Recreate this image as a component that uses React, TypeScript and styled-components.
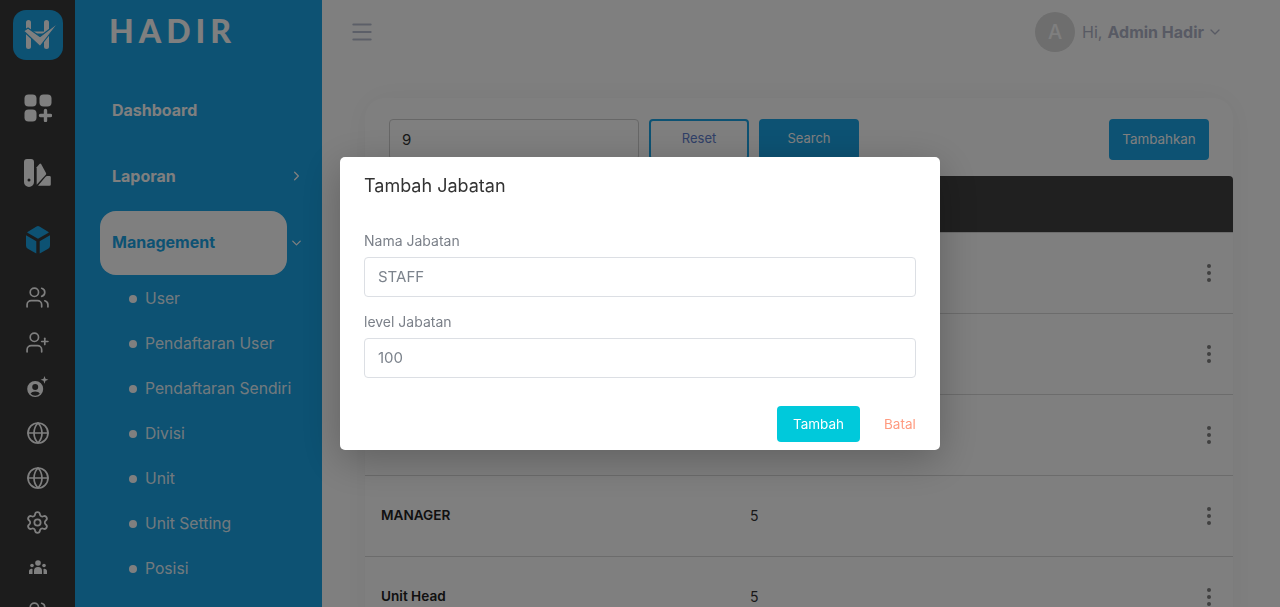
import styled, { createGlobalStyle } from "styled-components";
import {
  ChevronDown,
  ChevronRight,
  Globe,
  Menu,
  Settings,
  UserPlus,
  Users,
} from "lucide-react";

const GlobalStyle = createGlobalStyle`
  html, body {
    margin: 0;
    height: 100%;
    overflow: hidden;
    background: #fff;
    font-family: "Inter", "Liberation Sans", sans-serif;
  }
  * {
    box-sizing: border-box;
  }
`;

const Page = styled.div`
  display: flex;
  height: 607px;
  overflow: hidden;
`;

const Rail = styled.aside`
  width: 75px;
  flex-shrink: 0;
  background: #383838;
  display: flex;
  flex-direction: column;
  align-items: center;
  padding-top: 10px;
  color: #fff;
`;

const LogoBox = styled.div`
  width: 50px;
  height: 50px;
  margin-bottom: 15px;
  border-radius: 13px;
  background: #1aa4e6;
  flex-shrink: 0;
`;

const RailSlot = styled.div<{ $h: number; $active?: boolean }>`
  height: ${({ $h }) => $h}px;
  flex-shrink: 0;
  display: flex;
  align-items: center;
  justify-content: center;
  color: ${({ $active }) => ($active ? "#1aa4e6" : "#fff")};
`;

const Sidebar = styled.nav`
  width: 247px;
  flex-shrink: 0;
  background: #1aa4e6;
  color: #fff;
  padding-left: 25px;
`;

const Brand = styled.div`
  height: 77px;
  padding: 11px 0 0 9px;
  font-family: "Lato", sans-serif;
  font-size: 32px;
  line-height: 40px;
  font-weight: 900;
  letter-spacing: 5px;
`;

const MenuItem = styled.div<{ $active?: boolean }>`
  position: relative;
  width: 187px;
  height: ${({ $active }) => ($active ? "64px" : "66px")};
  margin-top: ${({ $active }) => ($active ? "2px" : "0")};
  margin-bottom: ${({ $active }) => ($active ? "1px" : "0")};
  padding-left: 12px;
  padding-bottom: ${({ $active }) => ($active ? "2px" : "0")};
  display: flex;
  align-items: center;
  font-size: 16px;
  font-weight: 700;
  border-radius: 16px;
  background: ${({ $active }) => ($active ? "#fff" : "transparent")};
  color: ${({ $active }) => ($active ? "#1aa4e6" : "#fff")};

  svg {
    position: absolute;
    right: -17px;
    top: 50%;
    transform: translateY(-50%);
    color: #fff;
  }
`;

const SubItem = styled.div`
  height: 45px;
  padding-left: 29px;
  display: flex;
  align-items: center;
  gap: 8px;
  font-size: 15.7px;
  white-space: nowrap;
  color: rgba(255, 255, 255, 0.9);

  &::before {
    content: "";
    width: 8px;
    height: 8px;
    border-radius: 50%;
    background: #fff;
  }
`;

const Main = styled.main`
  flex: 1;
  min-width: 0;
  padding-right: 47px;
`;

const TopBar = styled.header`
  height: 98px;
  padding: 12px 10px 0 27px;
  display: flex;
  align-items: flex-start;
  justify-content: space-between;
`;

const MenuButton = styled.div`
  height: 40px;
  display: flex;
  align-items: center;
  color: #b9bfd0;
`;

const UserBox = styled.div`
  display: flex;
  align-items: center;
  color: #b0b5c8;
  font-size: 16px;
`;

const Avatar = styled.div`
  width: 40px;
  height: 40px;
  margin-right: 7px;
  border-radius: 50%;
  background: #dcdcdc;
  color: #fff;
  font-size: 20px;
  font-weight: 500;
  display: flex;
  align-items: center;
  justify-content: center;
`;

const UserName = styled.b`
  margin: 0 3px 0 5px;
  font-weight: 700;
`;

const Card = styled.section`
  margin-left: 43px;
  border-radius: 20px 20px 0 0;
  background: #fff;
  box-shadow: 0 0 30px rgba(0, 0, 0, 0.05);
`;

const Toolbar = styled.div`
  display: flex;
  align-items: flex-start;
  padding: 21px 24px 16px;
`;

const SearchField = styled.div`
  width: 250px;
  height: 41px;
  margin-right: 10px;
  padding: 0 12px;
  border: 1px solid #cfcfcf;
  border-radius: 4px;
  font-size: 15px;
  line-height: 39px;
  color: #333;
`;

const ActionButton = styled.button<{ $outline?: boolean; $push?: boolean }>`
  width: 100px;
  height: 41px;
  margin-right: 10px;
  margin-left: ${({ $push }) => ($push ? "auto" : "0")};
  padding: 0 0 ${({ $push }) => ($push ? "2px" : "4px")};
  border-radius: 4px;
  border: 2px solid #1aa4e6;
  background: ${({ $outline }) => ($outline ? "transparent" : "#1aa4e6")};
  color: ${({ $outline }) => ($outline ? "#5f7fd0" : "#fff")};
  font-family: inherit;
  font-size: ${({ $push }) => ($push ? "13.4px" : "13px")};

  &:last-child {
    margin-right: 0;
  }
`;

const TableHead = styled.div`
  height: 56px;
  border-radius: 4px 4px 0 0;
  background: #404040;
`;

const Row = styled.div`
  height: 81px;
  padding: 0 16px;
  display: grid;
  grid-template-columns: 369px 1fr 16px;
  align-items: center;
  border-top: 1px solid #d8d8d8;
  font-size: 14px;
  color: #333;

  span {
    margin-bottom: 2px;
  }
`;

const RowName = styled.span`
  font-size: 13.6px;
  font-weight: 600;
  color: #222;
`;

const Dots = styled.div`
  display: flex;
  flex-direction: column;
  align-items: center;
  gap: 3px;

  i {
    width: 4px;
    height: 4px;
    border-radius: 50%;
    background: #808080;
  }
`;

const Backdrop = styled.div`
  position: fixed;
  inset: 0;
  background: rgba(0, 0, 0, 0.5);
  display: flex;
  justify-content: center;
  align-items: flex-start;
  padding-top: 157px;
  z-index: 100;
`;

const Modal = styled.div`
  width: 600px;
  height: 293px;
  padding: 0 24px;
  border-radius: 5px;
  background: #fff;
  box-shadow: 0 10px 40px rgba(0, 0, 0, 0.25);
`;

const ModalTitle = styled.h2`
  margin: 0;
  padding-top: 17px;
  height: 75px;
  font-size: 18px;
  line-height: 24px;
  font-weight: 400;
  color: #333;
`;

const FieldLabel = styled.label`
  display: block;
  height: 25px;
  font-size: 14px;
  line-height: 18px;
  color: #7b8089;
`;

const FieldInput = styled.div`
  height: 40px;
  margin-bottom: 16px;
  padding: 0 13px;
  border: 1px solid #dcdfe4;
  border-radius: 4px;
  font-size: 15px;
  line-height: 38px;
  color: #7c838c;
`;

const ModalFooter = styled.div`
  display: flex;
  justify-content: flex-end;
  align-items: center;
  gap: 24px;
  padding-top: 12px;
`;

const SubmitButton = styled.button`
  width: 83px;
  height: 36px;
  padding: 0;
  border: 0;
  border-radius: 4px;
  background: #00c9db;
  color: #fff;
  font-family: inherit;
  font-size: 13.5px;
`;

const CancelLink = styled.span`
  width: 32px;
  font-size: 13.5px;
  white-space: nowrap;
  color: #ff9b80;
`;

const LogoMark = () => (
  <svg width="50" height="50" viewBox="0 0 50 50">
    <rect x="13" y="10" width="5" height="29" rx="2.5" fill="#fff" />
    <rect x="31" y="10" width="5" height="29" rx="2.5" fill="#fff" />
    <path d="M18 21.500h13v2H18z" fill="#fff" />
    <path
      d="M10.500 21l4.500-3 12 8.500L46 12 27 36.500z"
      fill="#fff"
      stroke="#1aa4e6"
      strokeWidth="1.2"
      strokeLinejoin="round"
    />
  </svg>
);

const AppsIcon = () => (
  <svg width="28" height="28" viewBox="0 0 28 28" fill="currentColor">
    <rect x="0.5" y="0.5" width="12" height="12" rx="4" />
    <rect x="15.5" y="0.5" width="12" height="12" rx="4" />
    <rect x="0.5" y="15.5" width="12" height="12" rx="4" />
    <path d="M21.5 16.5v10M16.5 21.5h10" stroke="currentColor" strokeWidth="3.4" strokeLinecap="round" />
  </svg>
);

const SwatchIcon = () => (
  <svg width="28" height="28" viewBox="0 0 28 28" fill="currentColor">
    <path
      fillRule="evenodd"
      d="M3 0h4a3 3 0 0 1 3 3v20a5 5 0 0 1-10 0V3a3 3 0 0 1 3-3zm2 19.500a1.500 1.500 0 1 0 0 3 1.500 1.500 0 0 0 0-3z"
    />
    <path d="M12.700 8.300l2.800-3.400a1 1 0 0 1 1.600.2L22 14a1.500 1.500 0 0 1-.2 1.700l-9.100 10z" />
    <path d="M14 26.800l7.600-9a2 2 0 0 1 1.500-.8h2.400a1.300 1.300 0 0 1 1.300 1.300v7.200a1.300 1.300 0 0 1-1.300 1.300z" />
  </svg>
);

const CubeIcon = () => (
  <svg width="24" height="28" viewBox="0 0 24 28" fill="currentColor">
    <path d="M10.500.5a3 3 0 0 1 3 0l9 5.400a.5.5 0 0 1 0 .9L12 12.700 1.500 6.800a.5.5 0 0 1 0-.9z" />
    <path d="M0 9.300l10.300 6v12.300l-8.500-4.800A3.500 3.500 0 0 1 0 19.800z" />
    <path d="M24 9.300l-10.300 6v12.300l8.500-4.800a3.500 3.500 0 0 0 1.800-3z" />
  </svg>
);

const SpecialUserIcon = () => (
  <svg width="24" height="24" viewBox="0 0 24 24" fill="currentColor">
    <path
      fillRule="evenodd"
      d="M9.200 5a8 8 0 1 1 0 16 8 8 0 0 1 0-16zm0 3a3 3 0 1 0 0 6 3 3 0 0 0 0-6zm0 7.500c-2.200 0-3.800.9-4.600 2.300a6.300 6.300 0 0 0 9.200 0c-.8-1.400-2.400-2.300-4.600-2.300z"
    />
    <path d="M18.500 0l1 2.800 2.900 1-2.900 1-1 2.900-1-2.900-2.900-1 2.900-1z" />
  </svg>
);

const TeamIcon = () => (
  <svg width="18" height="16" viewBox="0 0 18 16" fill="currentColor">
    <circle cx="9" cy="3" r="2.800" />
    <circle cx="3" cy="5.500" r="1.800" />
    <circle cx="15" cy="5.500" r="1.800" />
    <path d="M5 14v-3a4 4 0 0 1 8 0v3z" />
    <path d="M0 14v-2.500A2.500 2.500 0 0 1 3.500 9L3.500 14zM18 14v-2.500A2.500 2.500 0 0 0 14.500 9V14z" />
  </svg>
);

const subMenus = [
  "User",
  "Pendaftaran User",
  "Pendaftaran Sendiri",
  "Divisi",
  "Unit",
  "Unit Setting",
  "Posisi",
];

// the first three rows sit behind the modal, only their menu dots show
const rows = [
  { id: 1, name: "", level: "" },
  { id: 2, name: "", level: "" },
  { id: 3, name: "", level: "" },
  { id: 4, name: "MANAGER", level: "5" },
  { id: 5, name: "Unit Head", level: "5" },
];

function App() {
  return (
    <>
      <GlobalStyle />
      <Page>
        <Rail>
          <LogoBox>
            <LogoMark />
          </LogoBox>
          <RailSlot $h={65}>
            <AppsIcon />
          </RailSlot>
          <RailSlot $h={65}>
            <SwatchIcon />
          </RailSlot>
          <RailSlot $h={70} $active>
            <CubeIcon />
          </RailSlot>
          <RailSlot $h={45}>
            <Users size={25} strokeWidth={1.6} />
          </RailSlot>
          <RailSlot $h={45}>
            <UserPlus size={25} strokeWidth={1.6} />
          </RailSlot>
          <RailSlot $h={45}>
            <SpecialUserIcon />
          </RailSlot>
          <RailSlot $h={45}>
            <Globe size={24} strokeWidth={1.7} />
          </RailSlot>
          <RailSlot $h={45}>
            <Globe size={24} strokeWidth={1.7} />
          </RailSlot>
          <RailSlot $h={45}>
            <Settings size={25} strokeWidth={1.7} />
          </RailSlot>
          <RailSlot $h={45}>
            <TeamIcon />
          </RailSlot>
          <RailSlot $h={45}>
            <Users size={25} strokeWidth={1.6} />
          </RailSlot>
        </Rail>

        <Sidebar>
          <Brand>HADIR</Brand>
          <MenuItem>Dashboard</MenuItem>
          <MenuItem>
            Laporan
            <ChevronRight size={15} />
          </MenuItem>
          <MenuItem $active>
            Management
            <ChevronDown size={15} />
          </MenuItem>
          {subMenus.map((menu) => (
            <SubItem key={menu}>{menu}</SubItem>
          ))}
        </Sidebar>

        <Main>
          <TopBar>
            <MenuButton>
              <Menu size={26} strokeWidth={1.9} />
            </MenuButton>
            <UserBox>
              <Avatar>A</Avatar>
              Hi,
              <UserName>Admin Hadir</UserName>
              <ChevronDown size={16} />
            </UserBox>
          </TopBar>
          <Card>
            <Toolbar>
              <SearchField>9</SearchField>
              <ActionButton $outline>Reset</ActionButton>
              <ActionButton>Search</ActionButton>
              <ActionButton $push>Tambahkan</ActionButton>
            </Toolbar>
            <TableHead />
            {rows.map((row) => (
              <Row key={row.id}>
                <RowName>{row.name}</RowName>
                <span>{row.level}</span>
                <Dots>
                  <i />
                  <i />
                  <i />
                </Dots>
              </Row>
            ))}
          </Card>
        </Main>
      </Page>

      <Backdrop>
        <Modal>
          <ModalTitle>Tambah Jabatan</ModalTitle>
          <FieldLabel>Nama Jabatan</FieldLabel>
          <FieldInput>STAFF</FieldInput>
          <FieldLabel>level Jabatan</FieldLabel>
          <FieldInput>100</FieldInput>
          <ModalFooter>
            <SubmitButton>Tambah</SubmitButton>
            <CancelLink>Batal</CancelLink>
          </ModalFooter>
        </Modal>
      </Backdrop>
    </>
  );
}

export default App;
